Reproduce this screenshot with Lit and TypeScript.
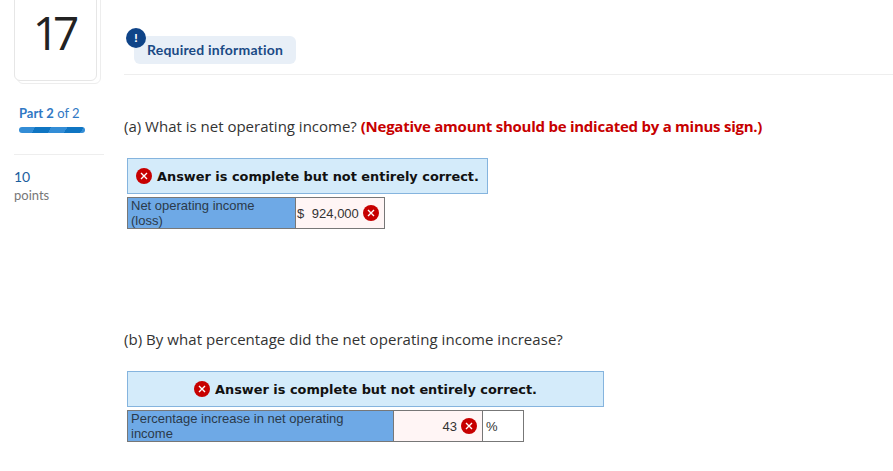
import { LitElement, html, css } from 'lit';
import { customElement } from 'lit/decorators.js';

const errorIcon = html`<svg class="err" viewBox="0 0 16 16" width="16" height="16">
  <circle cx="8" cy="8" r="8" fill="#c70000"></circle>
  <path d="M5 5l6 6M11 5l-6 6" stroke="#fff" stroke-width="1.4" fill="none"></path>
</svg>`;

@customElement('app-root')
export class AppRoot extends LitElement {
  static styles = css`
    :host {
      display: block;
      width: 893px;
      height: 471px;
      overflow: hidden;
      background: #fff;
      font-family: Lato, "Open Sans", sans-serif;
      color: #333;
    }
    .page {
      display: flex;
      height: 471px;
    }
    .side {
      width: 124px;
      flex: none;
      padding-left: 14px;
      box-sizing: border-box;
    }
    .card-stack {
      position: relative;
      width: 87px;
      height: 83px;
    }
    .card-back {
      position: absolute;
      left: 3px;
      top: -10px;
      width: 82px;
      height: 92px;
      border: 1px solid #ededed;
      border-radius: 6px;
      background: #fff;
    }
    .card {
      position: absolute;
      left: 0;
      top: -10px;
      width: 76px;
      height: 73px;
      border: 1px solid #e6e6e6;
      border-radius: 6px;
      background: #fff;
      display: flex;
      justify-content: center;
      padding: 16px 5px 0 0;
      font-family: "Open Sans", sans-serif;
      font-size: 46px;
      line-height: 50px;
      letter-spacing: -6px;
      color: #222;
    }
    .part {
      margin: 22px 0 0 5px;
      font-size: 13px;
      line-height: 16px;
      color: #2f78c4;
    }
    .part b {
      font-weight: 700;
    }
    .progress {
      width: 66px;
      height: 6px;
      margin: 6px 0 0 5px;
      border-radius: 3px;
      background: repeating-linear-gradient(120deg, #338dd6 0 14px, #0f75c2 14px 28px);
    }
    .rule {
      width: 90px;
      height: 1px;
      margin-top: 21px;
      background: #eee;
    }
    .points-num {
      margin-top: 13px;
      font-size: 14px;
      line-height: 17px;
      color: #1b5e9e;
    }
    .points {
      margin-top: 3px;
      font-size: 13px;
      line-height: 15px;
      color: #777;
    }
    .main {
      flex: 1;
      min-width: 0;
    }
    .head {
      height: 75px;
      box-sizing: border-box;
      border-bottom: 1px solid #eee;
      padding: 36px 0 0 10px;
    }
    .req {
      position: relative;
      display: inline-block;
      width: 162px;
      height: 28px;
      box-sizing: border-box;
      border-radius: 6px;
      background: #e8eff7;
      padding-left: 13px;
      font-size: 14px;
      font-weight: 700;
      letter-spacing: 0.2px;
      line-height: 28px;
      color: #1a4a85;
    }
    .bang {
      position: absolute;
      left: -8px;
      top: -8px;
      width: 20px;
      height: 20px;
      border-radius: 50%;
      background: #0f4488;
      color: #fff;
      font-size: 12px;
      font-weight: 900;
      line-height: 20px;
      text-align: center;
    }
    .q {
      margin: 0;
      font-family: "Open Sans", sans-serif;
      font-size: 15px;
      line-height: 20px;
      color: #333;
    }
    .q-a {
      margin-top: 41px;
    }
    .q-b {
      margin-top: 100px;
      letter-spacing: 0.05px;
    }
    .q strong {
      color: #c70000;
      font-weight: 700;
      letter-spacing: -0.25px;
    }
    .banner {
      margin: 22px 0 0 3px;
      height: 36px;
      box-sizing: border-box;
      border: 1px solid #85b4de;
      background: #d4ebfa;
      display: flex;
      align-items: center;
      gap: 5px;
      font-family: "DejaVu Sans", Verdana, sans-serif;
      font-size: 12.9px;
      font-weight: 700;
      color: #111;
    }
    .banner-a {
      width: 361px;
      padding-left: 8px;
    }
    .banner-b {
      width: 477px;
      justify-content: center;
    }
    .err {
      flex: none;
      display: block;
    }
    .row {
      display: flex;
      margin: 3px 0 0 3px;
      height: 32px;
      box-sizing: border-box;
      border: 1px solid #777;
      font-family: "Liberation Sans", Arial, sans-serif;
      font-size: 13px;
      line-height: 15px;
      color: #333;
      width: fit-content;
    }
    .label {
      background: #6ea9e6;
      border-right: 1px solid #777;
      box-sizing: border-box;
      padding: 0 30px 0 3px;
      color: #2b3a4a;
    }
    .label-a {
      width: 168px;
    }
    .label-b {
      width: 266px;
    }
    .val {
      background: #fff5f5;
      display: flex;
      align-items: center;
      box-sizing: border-box;
      gap: 4px;
    }
    .val-a {
      width: 88px;
      padding-left: 1px;
    }
    .val-a span {
      word-spacing: 4px;
    }
    .val-b {
      width: 89px;
      justify-content: flex-end;
      border-right: 1px solid #777;
      padding-right: 5px;
    }
    .unit {
      width: 40px;
      padding-left: 3px;
      box-sizing: border-box;
      display: flex;
      align-items: center;
    }
  `;

  render() {
    return html`
      <div class="page">
        <div class="side">
          <div class="card-stack">
            <div class="card-back"></div>
            <div class="card">17</div>
          </div>
          <div class="part"><b>Part 2</b> of 2</div>
          <div class="progress"></div>
          <div class="rule"></div>
          <div class="points-num">10</div>
          <div class="points">points</div>
        </div>
        <div class="main">
          <div class="head">
            <div class="req"><span class="bang">!</span>Required information</div>
          </div>
          <p class="q q-a">
            (a) What is net operating income?
            <strong>(Negative amount should be indicated by a minus sign.)</strong>
          </p>
          <div class="banner banner-a">${errorIcon}Answer is complete but not entirely correct.</div>
          <div class="row">
            <div class="label label-a">Net operating income (loss)</div>
            <div class="val val-a"><span>$ 924,000</span>${errorIcon}</div>
          </div>
          <p class="q q-b">(b) By what percentage did the net operating income increase?</p>
          <div class="banner banner-b">${errorIcon}Answer is complete but not entirely correct.</div>
          <div class="row">
            <div class="label label-b">Percentage increase in net operating income</div>
            <div class="val val-b"><span>43</span>${errorIcon}</div>
            <div class="unit">%</div>
          </div>
        </div>
      </div>
    `;
  }
}
